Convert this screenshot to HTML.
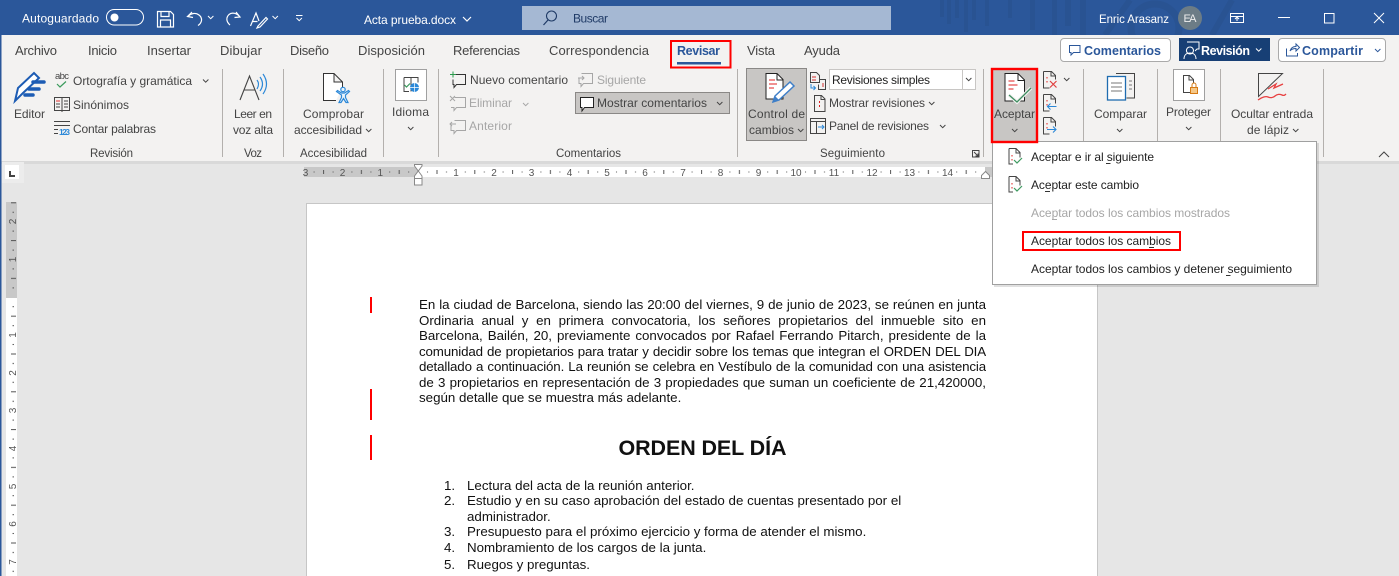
<!DOCTYPE html>
<html lang="es"><head><meta charset="utf-8"><title>Acta prueba.docx - Word</title>
<style>
html,body{margin:0;padding:0;width:1399px;height:576px;overflow:hidden;background:#e6e6e6}
svg{position:absolute;left:0;top:0}
text{font-family:"Liberation Sans",sans-serif;font-size:12px;fill:#444}
.tab{font-size:13px}
.w{fill:#fff}.d{fill:#a6a6a6}.k{fill:#262626}.g{font-size:11.5px;fill:#444}
.r{font-size:10px;fill:#555}
.ch{fill:none;stroke:#444;stroke-width:1}
.cw{fill:none;stroke:#fff;stroke-width:1}
.i{fill:none;stroke:#444;stroke-width:1}
.l{fill:none;stroke:#fff;stroke-width:1.2}
.bd{fill:none;stroke:#a6a6a6;stroke-width:1}
.doc{position:absolute;left:419px;width:567px;height:16px;overflow:hidden;font:13.33px/16px "Liberation Sans",sans-serif;color:#111;text-align:justify;text-align-last:justify}
.tight{letter-spacing:-.14px;word-spacing:-1.2px}
.li{position:absolute;font:13.33px/16px "Liberation Sans",sans-serif;color:#111;white-space:nowrap}
</style></head><body>
<svg width="1399" height="576" viewBox="0 0 1399 576" xmlns="http://www.w3.org/2000/svg">
<defs>
<pattern id="hr" patternUnits="userSpaceOnUse" x="418" y="167" width="37.8" height="10">
<rect x="9" y="4.5" width="1" height="1" fill="#555"/><rect x="18.5" y="3" width="1" height="4" fill="#555"/><rect x="28" y="4.5" width="1" height="1" fill="#555"/>
</pattern>
<pattern id="vr" patternUnits="userSpaceOnUse" x="6" y="297.2" width="11" height="37.8">
<rect x="6.5" y="9" width="1.5" height="1" fill="#555"/><rect x="5" y="18.5" width="5" height="1" fill="#555"/><rect x="6.5" y="28" width="1.5" height="1" fill="#555"/>
</pattern>
</defs>
<rect width="1399" height="576" fill="#e6e6e6"/>
<!-- title bar -->
<rect width="1399" height="35" fill="#2b579a"/>
<g fill="#295392">
<rect x="940" y="0" width="4" height="17"/><rect x="947" y="0" width="4" height="24"/><rect x="955" y="0" width="4" height="18"/><rect x="964" y="0" width="4" height="32"/><rect x="972" y="0" width="4" height="20"/><rect x="985" y="0" width="4" height="26"/><rect x="1008" y="0" width="4" height="18"/><rect x="1030" y="0" width="5" height="30"/><rect x="1052" y="0" width="5" height="35"/><rect x="1065" y="0" width="6" height="26"/><rect x="1080" y="0" width="6" height="35"/>
</g>
<circle cx="1155" cy="28" r="24" fill="none" stroke="#295392" stroke-width="7"/>
<path d="M1105 35L1130 0M1212 35l20-35" stroke="#295392" stroke-width="6" fill="none"/>
<text class="w" x="22" y="22.5" textLength="77">Autoguardado</text>
<rect x="106.500" y="9.500" width="37" height="15.500" rx="7.700" fill="none" stroke="#fff"/>
<circle cx="114.500" cy="17.500" r="4" fill="#fff"/>
<path class="l" d="M157.500 11.500h13l3 3v12.500h-16zM161 11.500v5h8v-5M160.500 27v-7h10v7"/>
<path class="l" d="M192 12l-4.500 4.500 5.500 1M188 16.500c3-3.500 8-4 11-1.500 4 3 3 8-1 10.500"/>
<path class="cw" d="M208 16l2.700 2.700 2.700-2.700"/>
<path class="l" d="M236 12l4 5-5.500.5M240 17c-3-4-8-5-11-2.500-3 3-3 7 1 10.500"/>
<path class="l" d="M250.500 26l5.500-13 3 8M252.500 21.500h5M258 26l8-8.500 1.500 1.500-7.500 8-3 1z"/>
<path class="cw" d="M272.500 16l2.700 2.700 2.700-2.700M296 15.500h6.500M296.500 18l2.700 2.700 2.700-2.700"/>
<text class="w" x="364" y="24" textLength="92">Acta prueba.docx</text>
<path d="M463 17l4 4 4-4" fill="none" stroke="#fff" stroke-width="1.200"/>
<rect x="522" y="6" width="369" height="24" fill="#a5b8d3"/>
<circle cx="551.500" cy="16" r="5" fill="none" stroke="#1f3a66" stroke-width="1.100"/>
<path d="M548 20l-4.500 5" stroke="#1f3a66" stroke-width="1.200" fill="none"/>
<text x="573" y="22.500" textLength="35" style="fill:#1f3a66">Buscar</text>
<text class="w" x="1099" y="23" textLength="70" style="font-size:11.500px">Enric Arasanz</text>
<circle cx="1190" cy="18" r="12" fill="#6c7c86"/>
<text x="1183.500" y="22" textLength="13" style="font-size:11px;fill:#eee">EA</text>
<path class="cw" d="M1230.500 13.500h13v9h-13zM1230.500 16.500h13M1237 21v-3M1235 19l2-2 2 2"/>
<path class="cw" d="M1278 17.500h12M1324.500 13.500h9.500v9.500h-9.500zM1374 13l10 10M1384 13l-10 10"/>
<!-- ribbon -->
<rect x="1" y="35" width="1398" height="126" fill="#f3f2f1"/>
<rect x="1" y="161" width="1398" height="3" fill="#d9d9d9"/>
<rect x="0" y="35" width="1.500" height="541" fill="#2b579a"/>
<text class="tab" x="15" y="55" textLength="42">Archivo</text>
<text class="tab" x="88" y="55" textLength="29">Inicio</text>
<text class="tab" x="147" y="55" textLength="44">Insertar</text>
<text class="tab" x="220" y="55" textLength="42">Dibujar</text>
<text class="tab" x="290" y="55" textLength="39">Diseño</text>
<text class="tab" x="358" y="55" textLength="67">Disposición</text>
<text class="tab" x="453" y="55" textLength="67">Referencias</text>
<text class="tab" x="549" y="55" textLength="100">Correspondencia</text>
<text class="tab" x="677" y="55" textLength="43" style="fill:#2b579a;font-weight:bold;font-size:12.500px">Revisar</text>
<rect x="677" y="62" width="44" height="2.500" fill="#2b579a"/>
<rect x="671" y="41" width="59.500" height="26.500" fill="none" stroke="#f00" stroke-width="2"/>
<text class="tab" x="747" y="55" textLength="28">Vista</text>
<text class="tab" x="804" y="55" textLength="36">Ayuda</text>
<!-- top right buttons -->
<rect x="1060.500" y="38.500" width="110" height="23" rx="3.500" fill="#fff" stroke="#aaa"/>
<path d="M1069.500 45.500h10.500v7h-6.500l-2.500 2.500v-2.500h-1.500z" fill="none" stroke="#2b579a"/>
<text x="1084" y="55" textLength="77" style="fill:#2b579a;font-weight:bold;font-size:12.500px">Comentarios</text>
<rect x="1179" y="38" width="91" height="23" fill="#173f75"/>
<path class="cw" d="M1190 47a3.500 3.500 0 1 1-.1 0M1184 59c0-4 2.500-6 6-6s6 2 6 6M1187 42h12v7h-2l-2 2"/>
<text class="w" x="1201" y="55" textLength="49" style="font-weight:bold;font-size:12.500px">Revisión</text>
<path class="cw" d="M1256 48.500l2.700 2.700 2.700-2.700"/>
<rect x="1278.500" y="38.500" width="107" height="23" rx="3.500" fill="#fff" stroke="#aaa"/>
<path d="M1286.500 48.500v7.500h11v-3M1290 51c1-3.500 3-4.500 6-4.500v-2.500l3.500 3.500-3.500 3.500v-2.500c-3 0-4.500.5-6 2.500z" fill="none" stroke="#2b579a"/>
<text x="1302" y="55" textLength="61" style="fill:#2b579a;font-weight:bold;font-size:12.500px">Compartir</text>
<path d="M1375 49l2.700 2.700 2.700-2.700" fill="none" stroke="#2b579a"/>
<!-- separators -->
<g fill="#b3b0ad"><rect x="222" y="69" width="1" height="88"/><rect x="283" y="69" width="1" height="88"/><rect x="383" y="69" width="1" height="88"/><rect x="438" y="69" width="1" height="88"/><rect x="737" y="69" width="1" height="88"/><rect x="983" y="69" width="1" height="88"/><rect x="1083" y="69" width="1" height="72"/><rect x="1157" y="69" width="1" height="72"/><rect x="1220" y="69" width="1" height="72"/><rect x="1323" y="69" width="1" height="88"/></g>
<!-- group labels -->
<text class="g" x="90" y="157" textLength="43">Revisión</text>
<text class="g" x="244" y="157" textLength="18">Voz</text>
<text class="g" x="300" y="157" textLength="67">Accesibilidad</text>
<text class="g" x="556" y="157" textLength="65">Comentarios</text>
<text class="g" x="820" y="157" textLength="65">Seguimiento</text>
<path class="i" d="M972.500 150.500h6.500v6.500h-6.500zM974 152l4 4M978 153.500v2.500h-2.500" stroke="#666"/>
<path d="M1379 157l5-5 5 5" fill="none" stroke="#444"/>
<!-- Revisión group -->
<path d="M15 101l3-13 16-15 5 5-16 15z" fill="#fff" stroke="#1d5cb4" stroke-width="2"/>
<path d="M33 82h11M29 89h10M25 95h8" stroke="#1d5cb4" stroke-width="3.500" stroke-linecap="round" fill="none"/>
<text x="14" y="118" textLength="31">Editor</text>
<text x="55" y="79" textLength="14" style="font-size:9.500px">abc</text>
<path d="M57 84l3 3 6-5.500" fill="none" stroke="#3a9a5c" stroke-width="1.200"/>
<text x="73" y="85" textLength="119">Ortografía y gramática</text>
<path class="ch" d="M203 79.500l2.700 2.700 2.700-2.700"/>
<path class="i" d="M54.500 97.500h15v13h-15zM62 97v15M64 101h4M64 104h4M64 107h4M56 104h4M56 107h4"/>
<path d="M56 101h4" stroke="#e03030" fill="none"/>
<text x="73" y="109" textLength="56">Sinónimos</text>
<path class="i" d="M54 121.500h16M54 125.500h16M54 129.500h4M54 133.500h4"/>
<text x="59" y="135" textLength="11" style="font-size:8.500px;font-weight:bold;fill:#2b88d8">123</text>
<text x="73" y="133" textLength="83">Contar palabras</text>
<!-- Voz -->
<path d="M240 100l9.500-24 9.500 24M244 90h11" fill="none" stroke="#444" stroke-width="1.100"/>
<path d="M257 80q3 4 0 9M260 77q5 7 0 14M263 74q7 10 0 20" fill="none" stroke="#2b88d8" stroke-width="1.200"/>
<text x="234" y="118" textLength="38">Leer en</text>
<text x="233" y="134" textLength="40">voz alta</text>
<!-- Accesibilidad -->
<path d="M336 100.500h-12.500v-27h10.500l8.500 8.500v5.500M334 74v8h8" fill="#fff" stroke="#333"/>
<g fill="#eaf4fb" stroke="#2b88d8" stroke-width="1.200"><circle cx="343" cy="89.500" r="2.200"/><path d="M336.500 91.500l1-1 4 2.500h3l4-2.500 1 1-4 3.500v2.500l2.500 5h-2l-2.500-4-2.500 4h-2l2.500-5v-2.500z"/></g>
<text x="303" y="118" textLength="61">Comprobar</text>
<text x="294" y="134" textLength="68">accesibilidad</text>
<path class="ch" d="M366 129l2.700 2.700 2.700-2.700"/>
<!-- Idioma -->
<rect x="395.500" y="69.500" width="31" height="31" fill="#fff" stroke="#a0a0a0"/>
<path class="i" d="M404 77.500h14v5M411 77.500v14M404 77.500v14h5"/>
<path d="M404.500 85l2 2 3.500-3.500" fill="none" stroke="#3a9a5c" stroke-width="1.200"/>
<circle cx="414.500" cy="87.500" r="4.500" fill="#2b88d8"/>
<path d="M410 87.500h9M414.500 83v9" stroke="#fff" stroke-width=".7" fill="none"/>
<text x="392" y="116" textLength="37">Idioma</text>
<path class="ch" d="M408 127l2.700 2.700 2.700-2.700"/>
<!-- Comentarios -->
<path d="M454.500 74.500h11v10h-9l-2.500 3v-3h-1v-5" fill="none" stroke="#333"/>
<path d="M450 74.500h6M453 71.500v6" stroke="#2a9a4a" fill="none"/>
<text x="470" y="84" textLength="98">Nuevo comentario</text>
<path class="bd" d="M454.500 97.500h11v10h-9l-2.500 3v-3h-3"/>
<path class="bd" d="M450 96l5 5M455 96l-5 5"/>
<text class="d" x="469" y="107" textLength="43">Eliminar</text>
<path class="bd" d="M523 103l2.700 2.700 2.700-2.700"/>
<path class="bd" d="M454.500 120.500h11v10h-9l-2.500 3v-3h-3v-5M456 124h-6M452 122l-2 2 2 2"/>
<text class="d" x="469" y="130" textLength="43">Anterior</text>
<path class="bd" d="M581.500 73.500h11v10h-9l-2.500 3v-3h-2v-6M578 78h6M582 76l2 2-2 2"/>
<text class="d" x="597" y="84" textLength="49">Siguiente</text>
<rect x="575.500" y="92.500" width="154" height="21" fill="#c8c6c4" stroke="#8a8886"/>
<path d="M580.500 97.500h13v10h-9l-2.500 3.500v-3.500h-1.500z" fill="#fff" stroke="#222"/>
<text x="597" y="107" textLength="110">Mostrar comentarios</text>
<path class="ch" d="M717 102l2.700 2.700 2.700-2.700"/>
<!-- Seguimiento -->
<rect x="746.500" y="68.500" width="60" height="72" fill="#c8c6c4" stroke="#8a8886"/>
<path d="M766 73.500h11l6 6v19.500h-17z" fill="#fff" stroke="#222"/>
<path d="M777 74v6h6" fill="none" stroke="#222"/>
<path d="M769 80h6M769 84h8M769 88h5" stroke="#e02020" fill="none"/>
<path d="M773 102l2-6 15-14 4 4-15 14z" fill="#fff" stroke="#3f7fc8" stroke-width="1.500"/>
<path d="M773 102l2-6 4 4z" fill="#3f7fc8"/>
<text x="748" y="118" textLength="57">Control de</text>
<text x="749" y="134" textLength="45">cambios</text>
<path class="ch" d="M798 129l2.700 2.700 2.700-2.700"/>
<path class="i" d="M810.500 72.500h6l3 3v7h-9zM819.500 79.500h6v10h-7v-5"/>
<path d="M812 77h4M812 80h4M822 84h2M822 86h2" stroke="#d03030" fill="none"/>
<path d="M811 84v4h4M813.500 86l2 2-2 2" stroke="#2b88d8" fill="none"/>
<rect x="829.500" y="69.500" width="146" height="20" fill="#fff" stroke="#c8c6c4"/>
<rect x="962" y="70" width="1" height="19" fill="#c8c6c4"/>
<text x="832" y="84" textLength="98" style="fill:#222">Revisiones simples</text>
<path class="ch" d="M966 78l2.700 2.700 2.700-2.700"/>
<path class="i" d="M814.500 95.500h7l3.500 3.500v12.500h-10.500zM821 96v3.500h4"/>
<path d="M819.500 101v2M819.500 105v2" stroke="#e02020" fill="none"/>
<text x="829" y="107" textLength="96">Mostrar revisiones</text>
<path class="ch" d="M929 102l2.700 2.700 2.700-2.700"/>
<path class="i" d="M810.500 118.500h15v15h-15zM810.500 121.500h15M816.500 122v11"/>
<path d="M818 127h6M822 125l2 2-2 2" stroke="#2b88d8" fill="none"/>
<text x="829" y="130" textLength="100">Panel de revisiones</text>
<path class="ch" d="M940 125l2.700 2.700 2.700-2.700"/>
<!-- Aceptar -->
<rect x="992" y="69" width="45" height="73.500" fill="#c8c6c4"/>
<path d="M1005 73.500h13l6.500 6.500v21h-19.500z" fill="#fff" stroke="#222"/>
<path d="M1018 74v6.500h6.500" fill="none" stroke="#222"/>
<path d="M1008.500 81h6M1008.500 85h9M1008.500 89h5" stroke="#e02020" fill="none"/>
<path d="M1009 95l8 7 14-14" fill="none" stroke="#f3f2f1" stroke-width="3.500"/>
<path d="M1009 95l8 7 14-14" fill="none" stroke="#3e8d60" stroke-width="1.300"/>
<text x="994" y="118" textLength="41">Aceptar</text>
<path class="ch" d="M1012 129l2.700 2.700 2.700-2.700"/>
<path class="i" d="M1043.500 71.500h8l4 4v4M1043.500 71.500v16.500h6M1051 72v4h4"/>
<path d="M1047 77v1.500M1047 81v1.500" stroke="#e02020" fill="none"/>
<path d="M1050 81l6.500 6.500M1056.500 81l-6.500 6.500" stroke="#e04040" stroke-width="1.200" fill="none"/>
<path class="ch" d="M1064 78l2.700 2.700 2.700-2.700"/>
<path class="i" d="M1043.500 94.500h8l4 4v5M1043.500 94.500v16.500h6M1051 95v4h4"/>
<path d="M1047 100v1.500M1047 104v1.500" stroke="#e02020" fill="none"/>
<path d="M1056.500 106.500h-9M1050.500 103.500l-3 3 3 3" stroke="#2b88d8" stroke-width="1.100" fill="none"/>
<path class="i" d="M1043.500 117.500h8l4 4v5M1043.500 117.500v16.500h6M1051 118v4h4"/>
<path d="M1047 123v1.500M1047 127v1.500" stroke="#e02020" fill="none"/>
<path d="M1047 129.500h9M1053 126.500l3 3-3 3" stroke="#2b88d8" stroke-width="1.100" fill="none"/>
<!-- Comparar -->
<path class="i" d="M1116 73.500h18.500v24.500h-8"/>
<path d="M1129 81h3M1129 85h3M1129 89h3" stroke="#777" fill="none"/>
<rect x="1107.500" y="76.500" width="18" height="23.500" fill="#fff" stroke="#1f6cb0" stroke-width="1.300"/>
<path d="M1111 83h11M1111 87h11M1111 91h11" stroke="#777" fill="none"/>
<text x="1094" y="118" textLength="53">Comparar</text>
<path class="ch" d="M1117 129l2.700 2.700 2.700-2.700"/>
<!-- Proteger -->
<rect x="1173.500" y="69.500" width="31" height="31" fill="#fff" stroke="#a0a0a0"/>
<path class="i" d="M1190 92.500h-6.500v-17h6l4 4v4M1189 76v4h4.500" stroke="#222"/>
<rect x="1190.500" y="87.500" width="7" height="6" fill="#f5c888" stroke="#d67a14"/>
<path d="M1192 87v-2a2 2 0 0 1 4 0v2" fill="none" stroke="#d67a14"/>
<text x="1166" y="116" textLength="45">Proteger</text>
<path class="ch" d="M1186 127l2.700 2.700 2.700-2.700"/>
<!-- Tinta -->
<path class="i" d="M1258.500 96.500v-23h24z"/>
<path d="M1268 89l8-5-2 4 9-4" fill="none" stroke="#e84040" stroke-width="1.300"/>
<path d="M1258 100c4-3 8-4 10-3s5 1 7-1 5-2 7-1 3 0 4-1" fill="none" stroke="#e84040" stroke-width="1.300"/>
<text x="1231" y="118" textLength="82">Ocultar entrada</text>
<text x="1247" y="134" textLength="42">de lápiz</text>
<path class="ch" d="M1293 129l2.700 2.700 2.700-2.700"/>
<!-- tab selector -->
<rect x="2" y="162" width="22" height="21" fill="#ececec"/>
<rect x="5" y="165" width="14" height="14" fill="#fff"/>
<path d="M10 171v5h5" fill="none" stroke="#444" stroke-width="2"/>
<!-- horizontal ruler -->
<rect x="304" y="167" width="114" height="10" fill="#c8c8c8"/>
<rect x="418" y="167" width="567" height="10" fill="#fff"/>
<rect x="985" y="167" width="7" height="10" fill="#c8c8c8"/>
<rect x="304" y="167" width="681" height="10" fill="url(#hr)"/>
<g text-anchor="middle">
<text class="r" x="305.500" y="176">3</text><text class="r" x="342.500" y="176">2</text><text class="r" x="380.300" y="176">1</text><text class="r" x="456" y="176">1</text><text class="r" x="494" y="176">2</text><text class="r" x="531.500" y="176">3</text><text class="r" x="569.500" y="176">4</text><text class="r" x="607" y="176">5</text><text class="r" x="645" y="176">6</text><text class="r" x="683" y="176">7</text><text class="r" x="720.500" y="176">8</text><text class="r" x="758.500" y="176">9</text><text class="r" x="796" y="176">10</text><text class="r" x="834" y="176">11</text><text class="r" x="872" y="176">12</text><text class="r" x="909.500" y="176">13</text><text class="r" x="947.500" y="176">14</text>
</g>
<path d="M414.500 164.500h7.500v1.500l-3.700 5-3.800-5z" fill="#fff" stroke="#888"/>
<path d="M418.300 171l3.700 5v2.500h-7.500v-2.500z" fill="#fff" stroke="#888"/>
<rect x="414.500" y="178.500" width="7.500" height="6.500" fill="#fff" stroke="#888"/>
<path d="M981.500 178.500v-3l4-4 4 4v3z" fill="#fff" stroke="#888"/>
<!-- vertical ruler -->
<rect x="6" y="202" width="11" height="96" fill="#c8c8c8"/>
<rect x="6" y="298" width="11" height="278" fill="#fff"/>
<rect x="6" y="202" width="11" height="374" fill="url(#vr)"/>
<g text-anchor="middle">
<text class="r" transform="translate(16 221.500) rotate(-90)">2</text><text class="r" transform="translate(16 259.500) rotate(-90)">1</text><text class="r" transform="translate(16 335) rotate(-90)">1</text><text class="r" transform="translate(16 373) rotate(-90)">2</text><text class="r" transform="translate(16 410.500) rotate(-90)">3</text><text class="r" transform="translate(16 448.500) rotate(-90)">4</text><text class="r" transform="translate(16 486.500) rotate(-90)">5</text><text class="r" transform="translate(16 524) rotate(-90)">6</text><text class="r" transform="translate(16 562) rotate(-90)">7</text>
</g>
<!-- page -->
<rect x="306.500" y="203.500" width="791" height="380" fill="#fff" stroke="#c6c6c6"/>
<g fill="#f00"><rect x="370" y="297" width="2" height="16"/><rect x="370" y="389" width="2" height="31"/><rect x="370" y="435" width="2" height="25"/></g>
<text x="618.500" y="455" textLength="168" style="font-size:21.500px;font-weight:bold;fill:#111">ORDEN DEL DÍA</text>
<!-- dropdown -->
<rect x="994" y="143" width="325" height="144" fill="#000" opacity=".12"/>
<rect x="992.500" y="141.500" width="324" height="143" fill="#fff" stroke="#a0a0a0"/>
<rect x="992" y="69" width="45" height="73" fill="none" stroke="#f00" stroke-width="2.400"/>
<path class="i" d="M1009 148.500h7l4 4v5M1009 148.500v15.500h4M1016 149v4h4" stroke="#333"/>
<path d="M1012 155v1.500M1012 159v1.500" stroke="#e02020" fill="none"/>
<path d="M1014 160l3 3 5-5" fill="none" stroke="#3e9a60" stroke-width="1.200"/>
<path class="i" d="M1009 176.500h7l4 4v5M1009 176.500v15.500h4M1016 177v4h4" stroke="#333"/>
<path d="M1012 183v1.500M1012 187v1.500" stroke="#e02020" fill="none"/>
<path d="M1014 188l3 3 5-5" fill="none" stroke="#3e9a60" stroke-width="1.200"/>
<text x="1031" y="161" textLength="123" style="fill:#222">Aceptar e ir al siguiente</text>
<rect x="1106" y="163" width="4.500" height="1" fill="#333"/>
<text x="1031" y="189" textLength="108" style="fill:#222">Aceptar este cambio</text>
<rect x="1045" y="191" width="5" height="1" fill="#333"/>
<text class="d" x="1031" y="217" textLength="199">Aceptar todos los cambios mostrados</text>
<rect x="1052" y="219" width="5" height="1" fill="#aaa"/>
<text x="1031" y="245" textLength="140" style="fill:#222">Aceptar todos los cambios</text>
<rect x="1149" y="247" width="5" height="1" fill="#333"/>
<rect x="1023" y="232" width="157" height="18" fill="none" stroke="#f00" stroke-width="2"/>
<text x="1031" y="273" textLength="261" style="fill:#222">Aceptar todos los cambios y detener seguimiento</text>
<rect x="1226" y="275" width="4.500" height="1" fill="#333"/>
</svg>
<div class="doc" style="top:297px">En la ciudad de Barcelona, siendo las 20:00 del viernes, 9 de junio de 2023, se reúnen en junta</div>
<div class="doc" style="top:312.500px">Ordinaria anual y en primera convocatoria, los señores propietarios del inmueble sito en</div>
<div class="doc" style="top:328px">Barcelona, Bailén, 20, previamente convocados por Rafael Ferrando Pitarch, presidente de la</div>
<div class="doc tight" style="top:343.500px">comunidad de propietarios para tratar y decidir sobre los temas que integran el ORDEN DEL DIA</div>
<div class="doc tight" style="top:359px">detallado a continuación. La reunión se celebra en Vestíbulo de la comunidad con una asistencia</div>
<div class="doc" style="top:374.500px">de 3 propietarios en representación de 3 propiedades que suman un coeficiente de 21,420000,</div>
<div class="doc" style="top:390px;text-align-last:left">según detalle que se muestra más adelante.</div>
<div class="li" style="left:444px;top:478px">1.</div><div class="li" style="left:467px;top:478px">Lectura del acta de la reunión anterior.</div>
<div class="li" style="left:444px;top:493px">2.</div><div class="li" style="left:467px;top:493px">Estudio y en su caso aprobación del estado de cuentas presentado por el</div>
<div class="li" style="left:467px;top:509px">administrador.</div>
<div class="li" style="left:444px;top:524px">3.</div><div class="li" style="left:467px;top:524px">Presupuesto para el próximo ejercicio y forma de atender el mismo.</div>
<div class="li" style="left:444px;top:540px">4.</div><div class="li" style="left:467px;top:540px">Nombramiento de los cargos de la junta.</div>
<div class="li" style="left:444px;top:557px">5.</div><div class="li" style="left:467px;top:557px">Ruegos y preguntas.</div>
</body></html>
